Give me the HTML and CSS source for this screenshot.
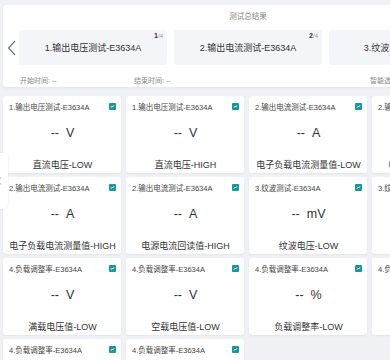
FILE: index.html
```html
<!DOCTYPE html>
<html lang="zh-CN">

<head>
  <meta charset="UTF-8">
  <meta name="viewport" content="width=device-width, initial-scale=1.0">
  <title>测试总结果</title>
  <link rel="stylesheet" href="styles.css">
</head>

<body>
  <div class="page">
    <div class="summary">
      <div class="summary-title">测试总结果</div>
      <div class="carousel">
        <span class="arrow">
          <svg width="9" height="16" viewBox="0 0 9 16"><path d="M8 1 L1.5 8 L8 15" fill="none" stroke="#6b7590" stroke-width="1.2"/></svg>
        </span>
        <div class="slides">
          <div class="slide"><span class="slide-text">1.输出电压测试-E3634A</span><span class="page-no"><b>1</b>/4</span></div>
          <div class="slide"><span class="slide-text">2.输出电流测试-E3634A</span><span class="page-no"><b>2</b>/4</span></div>
          <div class="slide"><span class="slide-text">3.纹波测试-E3634A</span><span class="page-no"><b>3</b>/4</span></div>
        </div>
      </div>
      <div class="times">
        <span class="time-start">开始时间: --</span>
        <span class="time-end">结束时间: --</span>
        <span class="time-mode">智能选择</span>
      </div>
    </div>

    <div class="grid"></div>
  </div>

  <div class="side-tab">
    <svg width="5" height="8" viewBox="0 0 5 8"><path d="M4 0.5 L1 4 L4 7.5" fill="none" stroke="#888" stroke-width="0.8"/></svg>
  </div>

  <script>
    const items = [
      ['1.输出电压测试-E3634A', 'V', '直流电压-LOW'],
      ['1.输出电压测试-E3634A', 'V', '直流电压-HIGH'],
      ['2.输出电流测试-E3634A', 'A', '电子负载电流测量值-LOW'],
      ['2.输出电流测试-E3634A', 'A', '电源电流回读值-LOW'],
      ['2.输出电流测试-E3634A', 'A', '电子负载电流测量值-HIGH'],
      ['2.输出电流测试-E3634A', 'A', '电源电流回读值-HIGH'],
      ['3.纹波测试-E3634A', 'mV', '纹波电压-LOW'],
      ['3.纹波测试-E3634A', 'mV', '纹波电压-HIGH'],
      ['4.负载调整率-E3634A', 'V', '满载电压值-LOW'],
      ['4.负载调整率-E3634A', 'V', '空载电压值-LOW'],
      ['4.负载调整率-E3634A', '%', '负载调整率-LOW'],
      ['4.负载调整率-E3634A', 'V', '满载电压值-HIGH'],
      ['4.负载调整率-E3634A', 'V', '空载电压值-HIGH'],
      ['4.负载调整率-E3634A', '%', '负载调整率-HIGH']
    ]

    const gridEl = document.querySelector('.grid')
    const check = '<svg class="check" width="7" height="7" viewBox="0 0 7 7"><rect width="7" height="7" rx="1" fill="#17999b"/><path d="M1.8 4.2 L5.2 2.8" stroke="#fff" stroke-width="1"/></svg>'

    items.forEach(([title, unit, label]) => {
      const card = document.createElement('div')
      card.className = 'card'
      card.innerHTML = `
        <div class="card-head"><span class="card-title">${title}</span>${check}</div>
        <div class="card-value"><span>--</span><span>${unit}</span></div>
        <div class="card-label">${label}</div>`
      gridEl.appendChild(card)
    })
  </script>
</body>

</html>
```

FILE: styles.css
```css
* {
  padding: 0;
  margin: 0;
  box-sizing: border-box;
}

body {
  width: 390px;
  height: 360px;
  overflow: hidden;
  background-color: #f0f1f4;
  font-family: "Liberation Sans", "Noto Sans CJK SC", sans-serif;
  color: #333;
}

.page {
  width: 600px;
  padding: 5px 0 0 3px;
}

.summary {
  width: 490px;
  height: 82px;
  background-color: #fff;
  border-radius: 4px;
  box-shadow: 0 1px 3px rgba(0, 0, 0, 0.05);
  padding-top: 6px;
}

.summary-title {
  font-size: 7.5px;
  line-height: 11px;
  color: #888;
  text-align: center;
}

.carousel {
  display: flex;
  align-items: center;
  margin-top: 8px;
  height: 35px;
}

.arrow {
  width: 16px;
  display: flex;
  justify-content: center;
}

.slides {
  display: flex;
  gap: 7px;
}

.slide {
  position: relative;
  width: 148px;
  height: 35px;
  flex-shrink: 0;
  background-color: #f3f5f9;
  border-radius: 3px;
  display: flex;
  align-items: center;
  justify-content: center;
  font-size: 9px;
  color: #333;
  white-space: nowrap;
}

.page-no {
  position: absolute;
  top: 2px;
  right: 4px;
  font-size: 6px;
  color: #999;
}

.page-no b {
  color: #333;
  font-size: 7px;
}

.times {
  display: flex;
  font-size: 7px;
  color: #888;
  margin-top: 10px;
  padding-left: 17px;
  white-space: nowrap;
}

.times span {
  flex: none;
}

.time-start {
  width: 114px;
}

.time-end {
  width: 236px;
}

.grid {
  display: grid;
  grid-template-columns: repeat(4, 118px);
  grid-auto-rows: 77px;
  column-gap: 5px;
  row-gap: 4px;
  margin-top: 9px;
}

.card {
  background-color: #fff;
  border-radius: 3px;
  box-shadow: 0 1px 2px rgba(0, 0, 0, 0.05);
  padding: 6px 5px 0 6px;
  display: flex;
  flex-direction: column;
}

.card-head {
  display: flex;
  justify-content: space-between;
  align-items: center;
  height: 9px;
}

.card-title {
  font-size: 7.5px;
  color: #444;
  white-space: nowrap;
}

.card-value {
  display: flex;
  justify-content: center;
  gap: 7px;
  font-size: 12.5px;
  line-height: 14px;
  margin-top: 15px;
  color: #333;
}

.card-label {
  text-align: center;
  font-size: 9px;
  line-height: 14px;
  margin-top: 18px;
  color: #333;
  white-space: nowrap;
}

.side-tab {
  position: absolute;
  left: -6px;
  top: 153px;
  width: 14px;
  height: 56px;
  background-color: #fff;
  border-radius: 6px;
  box-shadow: 0 0 3px rgba(0, 0, 0, 0.08);
  display: flex;
  align-items: center;
  justify-content: flex-end;
  padding-right: 6px;
}
```
